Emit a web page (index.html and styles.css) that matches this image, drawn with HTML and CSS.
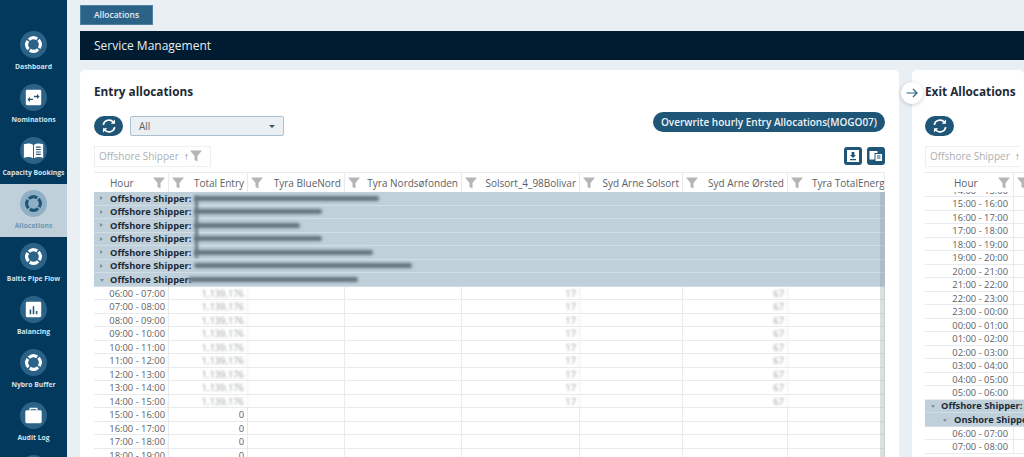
FILE: index.html
```html
<!DOCTYPE html>
<html lang="en">
<head>
    <meta charset="UTF-8">
    <meta name="viewport" content="width=device-width, initial-scale=1.0">
    <title>Service Management - Allocations</title>
    <link rel="stylesheet" href="styles.css">
</head>
<body>
    <svg class="icon-defs" width="0" height="0">
        <symbol id="i-ring" viewBox="0 0 28 28">
            <g transform="rotate(40 14 14)">
                <path d="M13.200 7.050 A7 7 0 0 0 7.050 13.200 M7.050 14.800 A7 7 0 0 0 13.200 20.950 M14.800 20.950 A7 7 0 0 0 20.950 14.800 M20.950 13.200 A7 7 0 0 0 14.800 7.050" fill="none" stroke="currentColor" stroke-width="3.200"/>
            </g>
        </symbol>
        <symbol id="i-swap" viewBox="0 0 28 28">
            <rect x="6" y="6" width="16" height="16" rx="1.500" fill="#fff"/>
            <path d="M14.500 12.200h3.200v-1.800l2.600 2.600-2.600 2.600v-1.900h-3.200zM13.500 15.200h-3.200v-1.800l-2.600 2.600 2.600 2.600v-1.900h3.200z" fill="#1f5678"/>
        </symbol>
        <symbol id="i-book" viewBox="0 0 28 28">
            <path d="M4 7.500c3.500-1 7-1 9.500.5v14c-2.500-1.500-6-1.500-9.500-.5zM14.500 8c2.500-1.500 6-1.500 9.500-.5v14c-3.500-1-7-1-9.500.5z" fill="#fff"/>
            <path d="M16.500 10.500h5M16.500 13h5M16.500 15.500h5M16.500 18h5" stroke="#1f5678" stroke-width="1.100"/>
        </symbol>
        <symbol id="i-bars" viewBox="0 0 28 28">
            <rect x="6" y="6" width="16" height="16" rx="1.500" fill="#fff"/>
            <path d="M10 14h1.600v5H10zM13.200 10.500h1.600V19h-1.600zM16.400 15.500H18V19h-1.600z" fill="#1f5678"/>
        </symbol>
        <symbol id="i-case" viewBox="0 0 28 28">
            <path d="M10.500 8.500V6.800h7v1.700" fill="none" stroke="#fff" stroke-width="1.500"/>
            <rect x="5.500" y="8.500" width="17" height="13.500" rx="1.500" fill="#fff"/>
        </symbol>
        <symbol id="i-funnel" viewBox="0 0 12 12">
            <path d="M0 .5h12L7.500 6v5.500l-3-1.500V6z" fill="currentColor"/>
        </symbol>
        <symbol id="i-refresh" viewBox="0 0 16 16">
            <path d="M2.300 6.800A5.800 5.800 0 0 1 12.500 4.200M13.700 9.200A5.800 5.800 0 0 1 3.500 11.800" fill="none" stroke="#fff" stroke-width="1.700"/>
            <path d="M14 1.500v4.300H9.700zM2 14.500v-4.300h4.300z" fill="#fff"/>
        </symbol>
    </svg>

    <nav class="sidebar">
        <a class="nav-item"><span class="nav-icon"><svg><use href="#i-ring"/></svg></span><span class="nav-label">Dashboard</span></a>
        <a class="nav-item"><span class="nav-icon"><svg><use href="#i-swap"/></svg></span><span class="nav-label">Nominations</span></a>
        <a class="nav-item"><span class="nav-icon"><svg><use href="#i-book"/></svg></span><span class="nav-label">Capacity Bookings</span></a>
        <a class="nav-item active"><span class="nav-icon"><svg><use href="#i-ring"/></svg></span><span class="nav-label">Allocations</span></a>
        <a class="nav-item"><span class="nav-icon"><svg><use href="#i-ring"/></svg></span><span class="nav-label">Baltic Pipe Flow</span></a>
        <a class="nav-item"><span class="nav-icon"><svg><use href="#i-bars"/></svg></span><span class="nav-label">Balancing</span></a>
        <a class="nav-item"><span class="nav-icon"><svg><use href="#i-ring"/></svg></span><span class="nav-label">Nybro Buffer</span></a>
        <a class="nav-item"><span class="nav-icon"><svg><use href="#i-case"/></svg></span><span class="nav-label">Audit Log</span></a>
        <a class="nav-item"><span class="nav-icon"></span></a>
    </nav>

    <main class="content">
        <div class="tabs"><span class="tab">Allocations</span></div>
        <h1 class="page-title">Service Management</h1>

        <div class="panels">
            <section class="card entry-card">
                <h2 class="card-title">Entry allocations</h2>
                <div class="toolbar">
                    <button class="pill-btn"><svg><use href="#i-refresh"/></svg></button>
                    <div class="select"><span>All</span><span class="caret"></span></div>
                    <button class="overwrite-btn">Overwrite hourly Entry Allocations(MOGO07)</button>
                </div>
                <div class="group-bar">
                    <div class="group-chip">Offshore Shipper <span class="sort-arrow">↑</span><svg class="funnel"><use href="#i-funnel"/></svg></div>
                    <div class="export-btns">
                        <button class="square-btn">
                            <svg viewBox="0 0 18 18"><rect x="3" y="3" width="12" height="12" fill="#fff"/><path d="M7.600 5h2.800v3H12l-3 3-3-3h1.600zM6 12h6v1.200H6z" fill="#1f5678"/></svg>
                        </button>
                        <button class="square-btn">
                            <svg viewBox="0 0 18 18"><rect x="2.500" y="4" width="8" height="8.500" fill="#fff"/><rect x="8" y="6.500" width="7.500" height="8" fill="#fff" stroke="#1f5678"/><path d="M10 9h3.500M10 11h3.500" stroke="#1f5678"/></svg>
                        </button>
                    </div>
                </div>

                <div class="grid entry-grid">
                    <div class="grid-head">
                        <div class="head-cell hour-head">Hour<svg class="funnel"><use href="#i-funnel"/></svg></div>
                        <div class="head-cell"><svg class="funnel"><use href="#i-funnel"/></svg>Total Entry</div>
                        <div class="head-cell"><svg class="funnel"><use href="#i-funnel"/></svg>Tyra BlueNord</div>
                        <div class="head-cell"><svg class="funnel"><use href="#i-funnel"/></svg>Tyra Nordsøfonden</div>
                        <div class="head-cell"><svg class="funnel"><use href="#i-funnel"/></svg>Solsort_4_98Bolivar</div>
                        <div class="head-cell"><svg class="funnel"><use href="#i-funnel"/></svg>Syd Arne Solsort</div>
                        <div class="head-cell"><svg class="funnel"><use href="#i-funnel"/></svg>Syd Arne Ørsted</div>
                        <div class="head-cell clip"><svg class="funnel"><use href="#i-funnel"/></svg><span class="clip-text">Tyra TotalEnergi</span></div>
                    </div>
                    <div class="group-row"><span class="tri"></span>Offshore Shipper:<span class="smudge w-185"></span></div>
                    <div class="group-row"><span class="tri"></span>Offshore Shipper:<span class="smudge w-128"></span></div>
                    <div class="group-row"><span class="tri"></span>Offshore Shipper:<span class="smudge w-106"></span></div>
                    <div class="group-row"><span class="tri"></span>Offshore Shipper:<span class="smudge w-128"></span></div>
                    <div class="group-row"><span class="tri"></span>Offshore Shipper:<span class="smudge w-179"></span></div>
                    <div class="group-row"><span class="tri"></span>Offshore Shipper:<span class="smudge w-218"></span></div>
                    <div class="group-row"><span class="tri open"></span>Offshore Shipper:<span class="smudge w-170 over"></span></div>
                    <div class="data-row"><div>06:00 - 07:00</div><div class="blur">1,139,176</div><div></div><div></div><div class="blur">17</div><div></div><div class="blur">67</div><div></div></div>
                    <div class="data-row"><div>07:00 - 08:00</div><div class="blur">1,139,176</div><div></div><div></div><div class="blur">17</div><div></div><div class="blur">67</div><div></div></div>
                    <div class="data-row"><div>08:00 - 09:00</div><div class="blur">1,139,176</div><div></div><div></div><div class="blur">17</div><div></div><div class="blur">67</div><div></div></div>
                    <div class="data-row"><div>09:00 - 10:00</div><div class="blur">1,139,176</div><div></div><div></div><div class="blur">17</div><div></div><div class="blur">67</div><div></div></div>
                    <div class="data-row"><div>10:00 - 11:00</div><div class="blur">1,139,176</div><div></div><div></div><div class="blur">17</div><div></div><div class="blur">67</div><div></div></div>
                    <div class="data-row"><div>11:00 - 12:00</div><div class="blur">1,139,176</div><div></div><div></div><div class="blur">17</div><div></div><div class="blur">67</div><div></div></div>
                    <div class="data-row"><div>12:00 - 13:00</div><div class="blur">1,139,176</div><div></div><div></div><div class="blur">17</div><div></div><div class="blur">67</div><div></div></div>
                    <div class="data-row"><div>13:00 - 14:00</div><div class="blur">1,139,176</div><div></div><div></div><div class="blur">17</div><div></div><div class="blur">67</div><div></div></div>
                    <div class="data-row"><div>14:00 - 15:00</div><div class="blur">1,139,176</div><div></div><div></div><div class="blur">17</div><div></div><div class="blur">67</div><div></div></div>
                    <div class="data-row"><div>15:00 - 16:00</div><div>0</div><div></div><div></div><div></div><div></div><div></div><div></div></div>
                    <div class="data-row"><div>16:00 - 17:00</div><div>0</div><div></div><div></div><div></div><div></div><div></div><div></div></div>
                    <div class="data-row"><div>17:00 - 18:00</div><div>0</div><div></div><div></div><div></div><div></div><div></div><div></div></div>
                    <div class="data-row"><div>18:00 - 19:00</div><div>0</div><div></div><div></div><div></div><div></div><div></div><div></div></div>
                    <span class="smudge-col"></span>
                    <span class="scrollbar"></span>
                </div>
            </section>

            <section class="card exit-card">
                <button class="collapse-btn">
                    <svg viewBox="0 0 14 14"><path d="M1.500 7h10.500M8 3l4 4-4 4" fill="none" stroke="#2b6287" stroke-width="1.200"/></svg>
                </button>
                <h2 class="card-title">Exit Allocations</h2>
                <div class="toolbar">
                    <button class="pill-btn"><svg><use href="#i-refresh"/></svg></button>
                </div>
                <div class="group-bar">
                    <div class="group-chip">Offshore Shipper <span class="sort-arrow">↑</span></div>
                </div>
                <div class="grid exit-grid">
                    <div class="grid-head">
                        <div class="head-cell hour-head">Hour<svg class="funnel"><use href="#i-funnel"/></svg></div>
                        <div class="head-cell"><svg class="funnel"><use href="#i-funnel"/></svg></div>
                    </div>
                    <div class="grid-scroll">
                        <div class="data-row first-row"><div>14:00 - 15:00</div><div></div></div>
                        <div class="data-row"><div>15:00 - 16:00</div><div></div></div>
                        <div class="data-row"><div>16:00 - 17:00</div><div></div></div>
                        <div class="data-row"><div>17:00 - 18:00</div><div></div></div>
                        <div class="data-row"><div>18:00 - 19:00</div><div></div></div>
                        <div class="data-row"><div>19:00 - 20:00</div><div></div></div>
                        <div class="data-row"><div>20:00 - 21:00</div><div></div></div>
                        <div class="data-row"><div>21:00 - 22:00</div><div></div></div>
                        <div class="data-row"><div>22:00 - 23:00</div><div></div></div>
                        <div class="data-row"><div>23:00 - 00:00</div><div></div></div>
                        <div class="data-row"><div>00:00 - 01:00</div><div></div></div>
                        <div class="data-row"><div>01:00 - 02:00</div><div></div></div>
                        <div class="data-row"><div>02:00 - 03:00</div><div></div></div>
                        <div class="data-row"><div>03:00 - 04:00</div><div></div></div>
                        <div class="data-row"><div>04:00 - 05:00</div><div></div></div>
                        <div class="data-row"><div>05:00 - 06:00</div><div></div></div>
                        <div class="group-row"><span class="tri open"></span>Offshore Shipper:</div>
                        <div class="group-row sub-group"><span class="tri open"></span>Onshore Shipper</div>
                        <div class="data-row"><div>06:00 - 07:00</div><div></div></div>
                        <div class="data-row"><div>07:00 - 08:00</div><div></div></div>
                    </div>
                </div>
            </section>
        </div>
    </main>
</body>
</html>
```

FILE: styles.css
```css
:root {
    --navy: #02395c;
    --steel: #1f5678;
    --tint: #bfd0da;
    --page: #e9eff3;
    --text: #5b6166;
    --dark: #1d2a35;
    --line: #e8ebed;
    --funnel: #b5b5b5;
}

* {
    margin: 0;
    padding: 0;
    box-sizing: border-box;
    font-family: 'Open Sans', sans-serif;
}

html, body {
    height: 100%;
    overflow: hidden;
}

body {
    display: flex;
    background: var(--page);
    color: var(--text);
}

.icon-defs {
    position: absolute;
}

button {
    border: none;
    cursor: pointer;
}

/* sidebar */
.sidebar {
    flex: 0 0 67px;
    height: 100%;
    overflow: hidden;
    background: var(--navy);
    padding-top: 25px;
}

.nav-item {
    display: flex;
    flex-direction: column;
    align-items: center;
    height: 53px;
    padding-top: 6px;
    color: #fff;
}

.nav-item.active {
    background: var(--tint);
    color: var(--steel);
}

.nav-icon {
    flex: none;
    width: 27px;
    height: 27px;
    border-radius: 50%;
    background: #2b6287;
}

.nav-item.active .nav-icon {
    background: #8fb0c4;
}

.nav-icon svg {
    display: block;
    width: 27px;
    height: 27px;
}

.nav-label {
    margin-top: 3px;
    font-size: 6.800px;
    font-weight: 700;
    line-height: 11px;
    white-space: nowrap;
    color: #d6e2ea;
}

.nav-item.active .nav-label {
    color: #6f98b2;
}

/* main column */
.content {
    flex: 1;
    min-width: 0;
    padding: 1px 0 0 13px;
}

.tabs {
    height: 30px;
}

.tab {
    display: inline-block;
    width: 73px;
    height: 20px;
    background: #2b6287;
    border: 1px solid #4f83a5;
    color: #e6eef3;
    font-size: 8.500px;
    font-weight: 600;
    line-height: 18px;
    text-align: center;
}

.page-title {
    height: 29px;
    padding-left: 14px;
    background: #011c30;
    color: #e8edf1;
    font-size: 12px;
    font-weight: 400;
    line-height: 30px;
}

.panels {
    display: flex;
    gap: 13px;
    margin-top: 10px;
}

.card {
    position: relative;
    height: 400px;
    background: #fff;
    border-radius: 5px 5px 0 0;
    padding: 0 14px;
}

.entry-card {
    flex: 0 0 819px;
    overflow: hidden;
}

.exit-card {
    flex: 1;
    min-width: 0;
    padding-left: 13px;
}

.card-title {
    height: 46px;
    padding-top: 13px;
    color: var(--dark);
    font-size: 11.800px;
    font-weight: 700;
    line-height: 17px;
    white-space: nowrap;
}

.toolbar {
    display: flex;
    align-items: center;
    gap: 7px;
    height: 20px;
}

.pill-btn {
    flex: none;
    display: flex;
    align-items: center;
    justify-content: center;
    width: 29px;
    height: 20px;
    border-radius: 10px;
    background: var(--steel);
}

.pill-btn svg {
    width: 16px;
    height: 16px;
}

.select {
    display: flex;
    align-items: center;
    justify-content: space-between;
    width: 154px;
    height: 20px;
    padding: 0 8px;
    background: #e9eff2;
    border: 1px solid #a9c1d0;
    border-radius: 2px;
    font-size: 10px;
}

.caret {
    border: 3px solid transparent;
    border-top-color: #33566c;
    border-bottom: none;
}

.overwrite-btn {
    margin: -8px 0 0 auto;
    height: 20px;
    width: 232px;
    border-radius: 10px;
    background: var(--steel);
    color: #eef3f6;
    font-size: 10px;
    font-weight: 600;
    white-space: nowrap;
}

.group-bar {
    display: flex;
    justify-content: space-between;
    align-items: flex-start;
    height: 36px;
    padding-top: 10px;
}

.group-chip {
    display: flex;
    align-items: center;
    height: 21px;
    padding: 0 0 2px 4px;
    width: 117px;
    border: 1px solid #eceeef;
    color: #aab0b4;
    font-size: 10px;
    white-space: nowrap;
}

.sort-arrow {
    margin-left: 5px;
    color: #8a9095;
    font-size: 10.500px;
}

.group-chip .funnel {
    margin-left: 1px;
}

.export-btns {
    display: flex;
    gap: 5px;
    margin-top: 1px;
}

.square-btn {
    width: 18px;
    height: 18px;
    border-radius: 3px;
    background: var(--steel);
}

.square-btn svg {
    display: block;
    width: 18px;
    height: 18px;
}

.funnel {
    flex: none;
    width: 12px;
    height: 12px;
    color: var(--funnel);
}

/* grids */
.grid {
    position: relative;
    font-size: 9.400px;
}

.entry-grid {
    --cols: 75px 79px 97px 117px 118px 103px 105px 97px;
    width: 791px;
    height: 285px;
    overflow: hidden;
}

.exit-grid {
    --cols: 89px 60px;
    width: 149px;
}

.grid-head {
    display: grid;
    grid-template-columns: var(--cols);
    height: 20px;
    border-top: 1px solid var(--line);
}

.head-cell {
    display: flex;
    align-items: center;
    justify-content: space-between;
    padding: 0 3px;
    border-right: 1px solid var(--line);
    font-size: 10px;
    white-space: nowrap;
    overflow: hidden;
}

.head-cell.hour-head {
    padding-left: 16px;
}

.head-cell.clip {
    justify-content: flex-start;
    gap: 9px;
    padding-right: 0;
}

.clip-text {
    min-width: 0;
    overflow: hidden;
}

.group-row {
    display: flex;
    align-items: center;
    height: 13.500px;
    padding-left: 16px;
    position: relative;
    background: var(--tint);
    border-bottom: 1px solid #d2dee5;
    color: var(--dark);
    font-weight: 700;
    font-size: 9.300px;
    white-space: nowrap;
    overflow: hidden;
}

.tri {
    position: absolute;
    left: 6px;
    top: 4px;
    border: 2.500px solid transparent;
    border-left: 3px solid #7e919d;
    border-right: none;
}

.tri.open {
    top: 5.500px;
    border: 2.500px solid transparent;
    border-top: 3px solid #7e919d;
    border-bottom: none;
}

.smudge {
    flex: none;
    height: 5px;
    margin-left: 3px;
    border-radius: 3px;
    background: #65737e;
    filter: blur(1.600px);
}

.smudge.over {
    margin-left: -3px;
}

.smudge-col {
    position: absolute;
    left: 101px;
    top: 24px;
    width: 3px;
    height: 62px;
    background: #65737e;
    filter: blur(1.500px);
}

.w-185 { width: 185px; }
.w-128 { width: 128px; }
.w-106 { width: 106px; }
.w-179 { width: 179px; }
.w-218 { width: 218px; }
.w-170 { width: 170px; }

.data-row {
    display: grid;
    grid-template-columns: var(--cols);
    height: 13.500px;
    border-bottom: 1px solid var(--line);
    line-height: 13px;
}

.data-row > div {
    padding-right: 3px;
    text-align: right;
    border-right: 1px solid var(--line);
    white-space: nowrap;
}

.blur {
    color: #979da1;
    filter: blur(1.300px);
}

.scrollbar {
    position: absolute;
    top: 20px;
    right: 0;
    bottom: 0;
    width: 5px;
    background: rgba(120, 130, 135, .25);
}

/* exit panel */
.collapse-btn {
    position: absolute;
    left: -11px;
    top: 12px;
    display: flex;
    align-items: center;
    justify-content: center;
    width: 22px;
    height: 22px;
    border-radius: 50%;
    background: #fff;
    box-shadow: 0 1px 4px rgba(0, 0, 0, .2);
}

.collapse-btn svg {
    width: 14px;
    height: 14px;
}

.exit-card .group-chip {
    width: 130px;
    border-right: none;
}

.exit-grid .head-cell.hour-head {
    padding-left: 29px;
}

.grid-scroll {
    height: 265px;
    overflow: hidden;
}

.first-row {
    height: 5px;
    overflow: hidden;
}

.first-row > div {
    margin-top: -8px;
}

.exit-grid .data-row > div:first-child {
    padding-right: 5px;
}

.sub-group {
    padding-left: 29px;
}

.sub-group .tri {
    left: 18px;
}
```
